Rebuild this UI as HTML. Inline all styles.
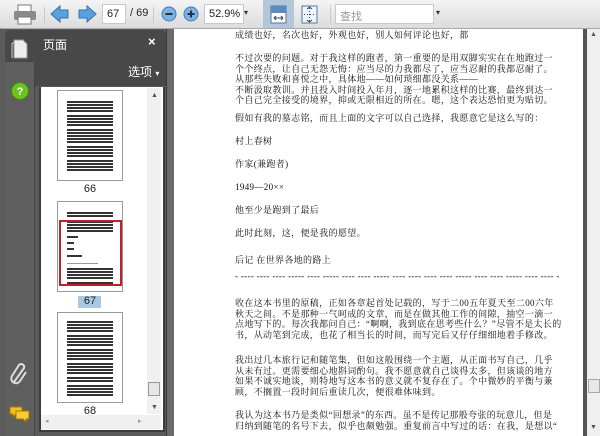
<!DOCTYPE html>
<html><head><meta charset="utf-8"><style>
*{margin:0;padding:0;box-sizing:border-box}
body{width:600px;height:436px;overflow:hidden;position:relative;background:#5b5b5b;font-family:"Liberation Sans","Noto Sans CJK SC",sans-serif}
.a{position:absolute}
#tb{left:0;top:0;width:600px;height:29px;background:linear-gradient(#f4f4f4,#dcdcdc);border-bottom:1px solid #a8a8a8}
.sep{position:absolute;top:6px;width:2px;height:17px;border-left:1px dotted #b0b0b0}
.box{position:absolute;background:#fff;border:1px solid #c8c8c8;font-size:11px;color:#222;padding:3px 0 0 4px;height:20px;top:4px}
.doc{left:174px;top:29px;width:409px;height:407px;background:#fff}
.t{position:absolute;left:61px;font-size:9px;line-height:10.6px;color:#111;font-family:"Liberation Serif","Noto Serif CJK SC",serif;white-space:nowrap;letter-spacing:0.35px}
.th{position:absolute;left:57px;width:66px;height:91px;background:#fff;border:1px solid #9a9a9a}
.lines{position:absolute;left:9px;right:9px;background:repeating-linear-gradient(#333 0 2px,#fff 2px 3px)}
.lbl{position:absolute;font-size:11px;color:#222;width:24px;text-align:center}
</style></head><body>
<div id="tb" class="a">
 <svg class="a" style="left:12px;top:4px" width="26" height="22"><rect x="6" y="1" width="13" height="7" fill="#fff" stroke="#777"/><rect x="2" y="7" width="22" height="9" rx="2" fill="#8a8a8a"/><rect x="6" y="13" width="13" height="7" fill="#fff" stroke="#777"/></svg>
 <div class="sep" style="left:44px"></div>
 <svg class="a" style="left:50px;top:4px" width="20" height="20"><path d="M1 10 L10 2 L10 6 L18 6 L18 14 L10 14 L10 18Z" fill="#5aa0dc" stroke="#2f75b5"/></svg>
 <svg class="a" style="left:77px;top:4px" width="20" height="20"><path d="M19 10 L10 2 L10 6 L2 6 L2 14 L10 14 L10 18Z" fill="#5aa0dc" stroke="#2f75b5"/></svg>
 <div class="box" style="left:102px;width:24px">67</div>
 <div class="a" style="left:130px;top:7px;font-size:11px;color:#222">/ 69</div>
 <div class="sep" style="left:153px"></div>
 <svg class="a" style="left:161px;top:6px" width="16" height="16"><circle cx="8" cy="8" r="7" fill="#7fb2e0" stroke="#3d7cbf"/><rect x="4.5" y="7" width="7" height="2" fill="#234"/></svg>
 <svg class="a" style="left:183px;top:6px" width="16" height="16"><circle cx="8" cy="8" r="7" fill="#7fb2e0" stroke="#3d7cbf"/><rect x="4.5" y="7" width="7" height="2" fill="#234"/><rect x="7" y="4.5" width="2" height="7" fill="#234"/></svg>
 <div class="box" style="left:204px;width:40px">52.9%</div>
 <div class="a" style="left:244px;top:8px;font-size:8px;color:#333">▾</div>
 <div class="a" style="left:263px;top:0;width:31px;height:28px;background:#b3c7da"></div>
 <svg class="a" style="left:270px;top:5px" width="17" height="19"><rect x="1" y="1" width="15" height="17" fill="#fff" stroke="#4c7aa6"/><rect x="1" y="1" width="15" height="7" fill="#5c8bb8"/><path d="M4 13h9M4 13l2-2M4 13l2 2M13 13l-2-2M13 13l-2 2" stroke="#345" fill="none"/></svg>
 <svg class="a" style="left:301px;top:5px" width="17" height="19"><rect x="1" y="1" width="15" height="17" fill="#eef5fb" stroke="#4c7aa6"/><path d="M8.5 3v13M3 9.5h11" stroke="#345" stroke-dasharray="1 2"/><path d="M6 4l2.5-2 2.5 2M6 15l2.5 2 2.5-2" stroke="#345" fill="none"/></svg>
 <div class="sep" style="left:330px"></div>
 <div class="box" style="left:335px;width:99px;color:#999">查找</div>
 <div class="a" style="left:436px;top:8px;font-size:8px;color:#333">▾</div>
</div>

<div class="a" style="left:5px;top:30px;width:161px;height:56px;background:#484848;border-radius:5px 5px 0 0"></div>
<div class="a" style="left:5px;top:62px;width:30px;height:374px;background:#5f5f5f;border-right:1px solid #444"></div>
<svg class="a" style="left:11px;top:38px" width="18" height="22"><path d="M3 2h9l4 4v14H3z" fill="#eee" stroke="#999"/><path d="M1 5h2M1 5v15" stroke="#ccc"/></svg>
<div class="a" style="left:43px;top:36px;font-size:12px;color:#fff">页面</div>
<div class="a" style="left:148px;top:34px;font-size:13px;color:#fff;font-weight:bold">×</div>
<div class="a" style="left:128px;top:63px;font-size:12px;color:#fff">选项 <span style="font-size:8px">▾</span></div>
<svg class="a" style="left:10px;top:81px" width="20" height="20"><circle cx="10" cy="10" r="8.5" fill="#6cc31e" stroke="#3e8a0f"/><text x="10" y="14" font-size="11" font-weight="bold" fill="#fff" text-anchor="middle" font-family="Liberation Sans">?</text></svg>
<svg class="a" style="left:9px;top:362px" width="20" height="24"><path d="M5 20 L15 6 a3 3 0 0 0-5-3 L3 14 a4.5 4.5 0 0 0 8 5 L17 10" fill="none" stroke="#ddd" stroke-width="2"/></svg>
<svg class="a" style="left:9px;top:405px" width="22" height="18"><path d="M1 2h12v7H7l-3 3V9H1z" fill="#f0c020" stroke="#a07a00"/><path d="M7 6h13v8h-3v3l-3-3H7z" fill="#f5cf30" stroke="#a07a00"/></svg>

<div class="a" style="left:39px;top:87px;width:126px;height:345px;background:#fff;border:2px solid #3c3c3c;border-top:0"></div>
<div class="a" style="left:147px;top:88px;width:14px;height:326px;background:#f0f0f0"></div>
<div class="a" style="left:151px;top:92px;font-size:7px;color:#555">▲</div>
<div class="a" style="left:148px;top:382px;width:12px;height:14px;background:#e6e6e6;border:1px solid #999"></div>
<div class="a" style="left:151px;top:404px;font-size:7px;color:#555">▼</div>
<div class="a" style="left:41px;top:415px;width:120px;height:14px;background:#f0f0f0"></div>
<div class="a" style="left:45px;top:417px;font-size:7px;color:#999">◂</div>
<div class="a" style="left:138px;top:417px;font-size:7px;color:#999">▸</div>

<div class="th" style="top:90px"><div class="lines" style="top:10px;height:12px"></div><div class="lines" style="top:24px;height:12px"></div><div class="lines" style="top:38px;height:15px"></div><div class="lines" style="top:55px;height:12px"></div><div class="lines" style="top:69px;height:12px"></div></div>
<div class="lbl" style="left:78px;top:183px">66</div>
<div class="th" style="top:201px"><div class="lines" style="top:10px;height:6px"></div><div class="lines" style="top:19px;height:12px"></div><div class="lines" style="top:34px;height:2px;right:44px"></div><div class="lines" style="top:40px;height:2px;right:48px"></div><div class="lines" style="top:46px;height:2px;right:48px"></div><div class="lines" style="top:53px;height:2px;right:40px"></div><div class="lines" style="top:61px;height:1px;right:24px;background:#999"></div><div class="lines" style="top:66px;height:12px"></div><div class="lines" style="top:80px;height:3px"></div><div class="a" style="left:1px;top:18px;width:63px;height:66px;border:2px solid #c0202a"></div></div>
<div class="a" style="left:78px;top:296px;width:23px;height:12px;background:#a9c8e2"></div>
<div class="lbl" style="left:78px;top:295px">67</div>
<div class="th" style="top:312px"><div class="lines" style="top:8px;height:12px"></div><div class="lines" style="top:22px;height:12px"></div><div class="lines" style="top:36px;height:12px"></div><div class="lines" style="top:50px;height:12px"></div><div class="lines" style="top:64px;height:6px"></div><div class="lines" style="top:72px;height:12px"></div></div>
<div class="lbl" style="left:78px;top:405px">68</div>

<div class="a" style="left:166px;top:29px;width:8px;height:407px;background:#6a6a6a;border-left:1px solid #3a3a3a"></div>

<div class="a doc">
<div class="t" style="top:1px">成绩也好，名次也好，外观也好，别人如何评论也好，都</div>
<div class="t" style="top:24px">不过次要的问题。对于我这样的跑者，第一重要的是用双脚实实在在地跑过一<br>个个终点，让自己无怨无悔：应当尽的力我都尽了，应当忍耐的我都忍耐了。<br>从那些失败和喜悦之中，具体地——如何琐细都没关系——<br>不断汲取教训。并且投入时间投入年月，逐一地累积这样的比赛，最终到达一<br>个自己完全接受的境界，抑或无限相近的所在。嗯，这个表达恐怕更为贴切。</div>
<div class="t" style="top:84px">假如有我的墓志铭，而且上面的文字可以自己选择，我愿意它是这么写的：</div>
<div class="t" style="top:107px">村上春树</div>
<div class="t" style="top:130px">作家(兼跑者)</div>
<div class="t" style="top:153px">1949—20××</div>
<div class="t" style="top:176px">他至少是跑到了最后</div>
<div class="t" style="top:199px">此时此刻，这，便是我的愿望。</div>
<div class="t" style="top:226px">后记 在世界各地的路上</div>
<div class="t" style="top:242px;letter-spacing:0.3px">- ---- ---- ---- ----- ---- ----- ---- ---- ----- ---- ---- ---- ---- ----- ---- ---- ----- ---- ---- -</div>
<div class="t" style="top:269px">收在这本书里的原稿，正如各章起首处记载的，写于二00五年夏天至二00六年<br>秋天之间。不是那种一气呵成的文章，而是在做其他工作的间隙，抽空一滴一<br>点地写下的。每次我都问自己：“啊啊，我到底在思考些什么？”尽管不是太长的<br>书，从动笔到完成，也花了相当长的时间，而写完后又仔仔细细地着手修改。</div>
<div class="t" style="top:326px">我出过几本旅行记和随笔集，但如这般围绕一个主题，从正面书写自己，几乎<br>从未有过。更需要细心地斟词酌句。我不愿意就自己谈得太多，但该谈的地方<br>如果不诚实地谈，则特地写这本书的意义就不复存在了。个中微妙的平衡与兼<br>顾，不搁置一段时间后重读几次，便很难体味到。</div>
<div class="t" style="top:381px">我认为这本书乃是类似“回想录”的东西。虽不是传记那般夸张的玩意儿，但是<br>归纳到随笔的名号下去，似乎也颇勉强。重复前言中写过的话：在我，是想以“</div>
</div>

<div class="a" style="left:583px;top:29px;width:4px;height:407px;background:#555"></div>
<div class="a" style="left:587px;top:29px;width:13px;height:407px;background:#efefef"></div>
<div class="a" style="left:590px;top:31px;font-size:7px;color:#555">▲</div>
<div class="a" style="left:588px;top:379px;width:12px;height:14px;background:#e8e8e8;border:1px solid #aaa"></div>
<div class="a" style="left:590px;top:424px;font-size:7px;color:#555">▼</div>
</body></html>
